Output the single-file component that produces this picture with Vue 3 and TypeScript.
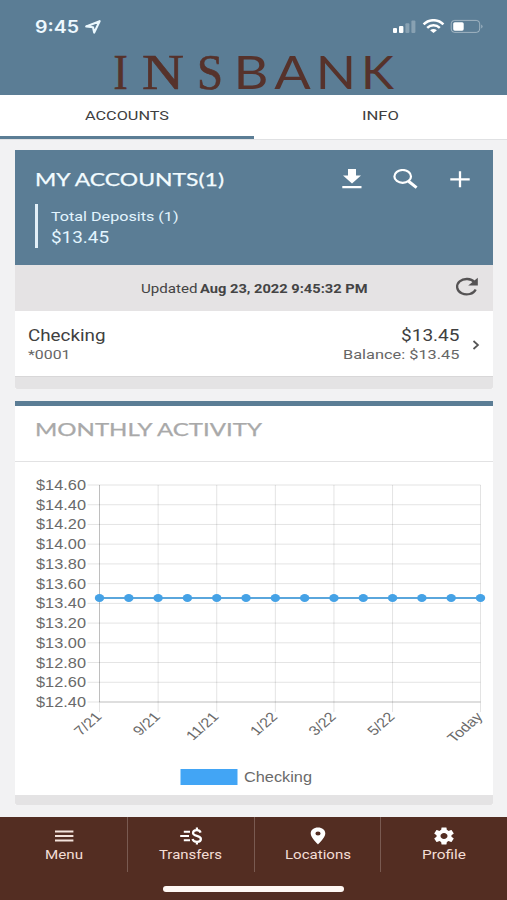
<script setup lang="ts">
import { h } from 'vue'

interface FitProps { text: string; w: number; size: number }

// Single line of text set to an exact width; the baseline sits `size` px below the top.
const FitText = (p: FitProps) =>
  h('svg', { width: p.w, height: Math.ceil(p.size * 1.25), style: { display: 'block', overflow: 'visible', flex: 'none' } }, [
    h('text', { x: 0, y: p.size, 'font-size': p.size, textLength: p.w, lengthAdjust: 'spacingAndGlyphs', fill: 'currentColor' }, p.text),
  ])
FitText.props = ['text', 'w', 'size']

const logo = [
  { c: 'I', x: 113.6, w: 14.2, serif: true },
  { c: 'N', x: 142, w: 41.9, serif: true },
  { c: 'S', x: 197, w: 26, serif: true },
  { c: 'B', x: 233.5, w: 35, serif: false },
  { c: 'A', x: 274.3, w: 36.5, serif: false },
  { c: 'N', x: 315.8, w: 40.3, serif: false },
  { c: 'K', x: 361, w: 33, serif: false },
]

const nav = [
  { id: 'menu', label: 'Menu', w: 38 },
  { id: 'transfers', label: 'Transfers', w: 63 },
  { id: 'locations', label: 'Locations', w: 66 },
  { id: 'profile', label: 'Profile', w: 44 },
]

// Chart geometry, relative to the chart area
const left = 84.5
const right = 465.5
const top = 23
const bottom = 240
const stepX = (right - left) / 13
const yLabels = Array.from({ length: 12 }, (_, i) => ({
  text: '$' + (14.6 - i * 0.2).toFixed(2),
  y: top + (i * (bottom - top)) / 11,
}))
const xLabels = [
  { text: '7/21', i: 0 }, { text: '9/21', i: 2 }, { text: '11/21', i: 4 }, { text: '1/22', i: 6 },
  { text: '3/22', i: 8 }, { text: '5/22', i: 10 }, { text: 'Today', i: 13 },
].map((l) => ({ text: l.text, x: left + l.i * stepX }))
const points = Array.from({ length: 14 }, (_, i) => left + i * stepX)
</script>

<template>
  <div class="phone">
    <header class="top">
      <div class="status">
        <FitText class="time" text="9:45" :w="44" :size="17" />
        <svg class="arrow" width="16" height="14" viewBox="0 0 16 14"><path d="M1.2 6.4 14.6 1.2 9.2 12.6 8 7.2Z" fill="none" stroke="#eaf8fe" stroke-width="2.1" stroke-linejoin="round" /></svg>
        <span class="spacer"></span>
        <svg width="92" height="16" viewBox="0 0 92 16">
          <g fill="#fff">
            <rect x="0" y="9" width="4" height="5" rx="1" /><rect x="6" y="7" width="4.4" height="7" rx="1" />
            <rect x="12.4" y="4.2" width="4" height="9.8" rx="1" opacity=".28" /><rect x="18.4" y="1.5" width="4" height="12.5" rx="1" opacity=".28" />
          </g>
          <g fill="none" stroke="#fff" stroke-width="2.5">
            <path d="M30.6 5.4C36-.2 45-.2 50.4 5.4" /><path d="M34.2 8.8C37.8 5.4 43.2 5.4 46.8 8.8" />
          </g>
          <path d="M37.1 11.2Q40.5 8.8 43.9 11.2L40.5 14Z" fill="#fff" />
          <rect x="58.2" y="1.4" width="28.5" height="12" rx="3.4" fill="none" stroke="#fff" stroke-opacity=".42" />
          <rect x="60.2" y="3.2" width="10.5" height="8.5" rx="1.6" fill="#fff" />
          <path d="M88.4 5.4Q90.6 7.4 88.4 9.6Z" fill="#fff" opacity=".5" />
        </svg>
      </div>
      <svg class="logo" width="507" height="65" viewBox="0 40 507 65">
        <text v-for="(l, i) in logo" :key="i" :x="l.x" y="89" :class="l.serif ? 'serif' : 'sans'" :textLength="l.w" lengthAdjust="spacingAndGlyphs">{{ l.c }}</text>
      </svg>
    </header>

    <nav class="tabs">
      <div class="tab active"><FitText text="ACCOUNTS" :w="84" :size="13.5" /></div>
      <div class="tab"><FitText text="INFO" :w="37" :size="13.5" /></div>
    </nav>

    <main class="content">
      <section class="card accounts">
        <div class="summary">
          <div class="title-row">
            <FitText class="title" text="MY ACCOUNTS(1)" :w="189" :size="18" />
            <div class="actions">
              <svg width="20" height="20" viewBox="0 0 20 20" fill="#fff"><path d="M6 0h8v6.5h5L10 14.5 1 6.5h5ZM.3 17h19.2v2.3H.3Z" /></svg>
              <svg width="25" height="20" viewBox="0 0 25 20" fill="none" stroke="#fff"><ellipse cx="9.7" cy="7.4" rx="8.3" ry="6.4" stroke-width="2.2" /><path d="M15.5 12.2 23.6 18.6" stroke-width="3" /></svg>
              <svg width="20" height="20" viewBox="0 0 20 20" stroke="#fff" stroke-width="2.3"><path d="M.3 10.4H19.7M10 2.3V18.3" /></svg>
            </div>
          </div>
          <div class="deposits">
            <FitText text="Total Deposits (1)" :w="127.5" :size="13.5" />
            <FitText class="amount" text="$13.45" :w="58" :size="16" />
          </div>
        </div>
        <div class="updated">
          <FitText text="Updated" :w="56.5" :size="13" />
          <FitText class="bold" text="Aug 23, 2022 9:45:32 PM" :w="167.5" :size="13" />
          <svg class="refresh" width="24" height="20" viewBox="0 0 24 20"><path d="M19.5 5.2A9.6 7.7 0 1 0 20.7 12.4" fill="none" stroke="#555354" stroke-width="2.3" /><path d="M22.8.8V8.6H13.2Z" fill="#555354" /></svg>
        </div>
        <div class="account">
          <div class="col">
            <FitText class="name" text="Checking" :w="77.5" :size="16.3" />
            <FitText class="sub" text="*0001" :w="42.5" :size="13.4" />
          </div>
          <div class="col end">
            <FitText class="name" text="$13.45" :w="58.5" :size="16.3" />
            <FitText class="sub" text="Balance: $13.45" :w="116.5" :size="13.4" />
          </div>
          <svg class="chevron" width="8" height="10" viewBox="0 0 8 10"><path d="M1.5 1 6 5 1.5 9" fill="none" stroke="#555" stroke-width="1.7" /></svg>
        </div>
        <div class="foot"></div>
      </section>

      <section class="card activity">
        <div class="activity-head"><FitText class="title" text="MONTHLY ACTIVITY" :w="227" :size="18" /></div>
        <svg class="chart" width="478" height="333" viewBox="0 0 478 333">
          <g stroke="#000" stroke-opacity=".11">
            <path v-for="l in yLabels" :key="l.text" :d="`M${left - 12} ${l.y}H${right}`" />
            <path v-for="l in xLabels" :key="l.text" :d="`M${l.x} ${top}V${bottom + 10}`" />
          </g>
          <path :d="`M${left} ${top}V${bottom}H${right}`" fill="none" stroke="#000" stroke-opacity=".16" />
          <text v-for="l in yLabels" :key="l.text" x="21" :y="l.y + 5" textLength="50" lengthAdjust="spacingAndGlyphs">{{ l.text }}</text>
          <text v-for="l in xLabels" :key="l.text" class="tick" text-anchor="end" :transform="`translate(${l.x + 3} ${bottom + 15.5}) scale(1.22 1) rotate(-47)`">{{ l.text }}</text>
          <path :d="`M${left} 136H${right}`" stroke="#5aa6dc" stroke-width="2.2" />
          <ellipse v-for="x in points" :key="x" :cx="x" cy="136" rx="4.7" ry="4" fill="#45a2e6" />
          <rect x="165.5" y="307" width="57" height="16" fill="#42a5f5" />
          <text x="229" y="319.7" textLength="68" lengthAdjust="spacingAndGlyphs">Checking</text>
        </svg>
        <div class="foot"></div>
      </section>
    </main>

    <footer class="bottom">
      <div class="items">
        <div v-for="n in nav" :key="n.id" class="item">
          <svg v-if="n.id === 'menu'" width="20" height="18" viewBox="0 0 20 18"><path d="M1 4.4H19.4M1 9H19.4M1 13.6H19.4" stroke="#f3e3dc" stroke-width="2" /></svg>
          <svg v-else-if="n.id === 'transfers'" width="22" height="18" viewBox="0 0 22 18" fill="none" stroke="#fff">
            <path d="M3.8 4.8H10M.2 9H9M3.8 13.2H10" stroke-width="1.9" />
            <path d="M20.6 5.7C20 3.8 18.6 3.2 16.9 3.2 14.6 3.2 13 4.3 13 6 13 9.7 20.9 8 20.9 12 20.9 13.9 19.3 14.8 17 14.8 14.6 14.8 13 13.9 12.5 12M16.9.6V3.3M16.9 14.7V17.4" stroke-width="2.2" />
          </svg>
          <svg v-else-if="n.id === 'locations'" width="16" height="18" viewBox="0 0 16 18"><path d="M8 .6C3.8.6.7 3.1.7 6.5.7 10.8 8 17.4 8 17.4S15.3 10.8 15.3 6.5C15.3 3.1 12.2.6 8 .6ZM8 4.4A2.6 2.1 0 1 1 8 8.6 2.6 2.1 0 1 1 8 4.4Z" fill="#fff" fill-rule="evenodd" /></svg>
          <svg v-else width="22" height="18" viewBox="1 1.5 22 21" preserveAspectRatio="none"><path fill="#fff" d="M19.43 12.98c.04-.32.07-.64.07-.98s-.03-.66-.07-.98l2.11-1.65c.19-.15.24-.42.12-.64l-2-3.46c-.12-.22-.39-.3-.61-.22l-2.49 1c-.52-.4-1.08-.73-1.69-.98l-.38-2.65C14.46 2.18 14.25 2 14 2h-4c-.25 0-.46.18-.49.42l-.38 2.65c-.61.25-1.17.59-1.69.98l-2.49-1c-.23-.09-.49 0-.61.22l-2 3.46c-.13.22-.07.49.12.64l2.11 1.65c-.04.32-.07.65-.07.98s.03.66.07.98l-2.11 1.65c-.19.15-.24.42-.12.64l2 3.46c.12.22.39.3.61.22l2.49-1c.52.4 1.08.73 1.69.98l.38 2.65c.03.24.24.42.49.42h4c.25 0 .46-.18.49-.42l.38-2.65c.61-.25 1.17-.59 1.69-.98l2.49 1c.23.09.49 0 .61-.22l2-3.46c.12-.22.07-.49-.12-.64l-2.11-1.65zM12 15.5c-1.93 0-3.5-1.57-3.5-3.5s1.57-3.5 3.5-3.5 3.5 1.57 3.5 3.5-1.57 3.5-3.5 3.5z" /></svg>
          <FitText :text="n.label" :w="n.w" :size="13" />
        </div>
      </div>
      <div class="home"></div>
    </footer>
  </div>
</template>

<style>
body { background: #f2f2f2; }
</style>

<style scoped>
.phone { width: 507px; height: 900px; display: flex; flex-direction: column; overflow: hidden; background: #f2f2f3; font-family: Roboto, "Liberation Sans", sans-serif; color: #444; }
svg { display: block; flex: none; }
.top { height: 95px; background: #5b7d95; }
.status { height: 40px; box-sizing: border-box; display: flex; align-items: flex-start; padding: 16px 22px 0 34.5px; color: #eef9ff; font-family: Inter, sans-serif; font-weight: 600; }
.status > svg:last-child { margin-top: 3px; }
.arrow { margin: 4px 0 0 6px; }
.spacer { flex: 1; }
.logo { fill: #56322b; overflow: visible; }
.serif { font: 50px "Liberation Serif", serif; stroke: #56322b; stroke-width: 0.7px; }
.sans { font: 45.5px Lato, sans-serif; }
.tabs { height: 45px; display: flex; background: #fff; border-bottom: 1px solid #e0e1e3; box-sizing: border-box; flex: none; position: relative; }
.tab { flex: 1; display: flex; justify-content: center; padding-top: 10.5px; color: #3e3e40; box-sizing: border-box; }
.tab.active { border-bottom: 3.5px solid #5b7d95; }
.content { flex: 1; padding: 10px 14px 0 15px; display: flex; flex-direction: column; gap: 12px; }
.card { background: #fff; }
.summary { height: 115px; box-sizing: border-box; padding: 18px 23px 0 20px; background: #5b7d95; color: #e3f5ff; }
.title-row { display: flex; justify-content: space-between; }
.title { font-family: Lato, sans-serif; color: #f3fcff; stroke: currentColor; stroke-width: 0.25px; }
.actions { display: flex; gap: 31px; padding-top: 1px; }
.actions svg:nth-child(3) { margin-left: 1px; }
.deposits { height: 44px; box-sizing: border-box; margin-top: 13px; padding: 2.5px 0 0 13px; border-left: 3px solid #e3f0f8; display: flex; flex-direction: column; gap: 3px; }
.updated { height: 46px; display: flex; justify-content: center; padding: 15px 0 0; box-sizing: border-box; gap: 3px; background: #e5e3e4; position: relative; color: #444; }
.bold { font-weight: 700; }
.refresh { position: absolute; right: 14px; top: 12px; }
.account { height: 66px; box-sizing: border-box; display: flex; padding: 14px 13px 0 13px; border-bottom: 1px solid #d8d7d8; }
.col { display: flex; flex-direction: column; }
.col .sub { margin-top: 0; color: #666; }
.col .name { color: #404040; }
.end { margin-left: auto; align-items: flex-end; }
.chevron { margin: 15px 0 0 12.5px; }
.foot { background: #e4e3e4; height: 12px; border-radius: 0 0 2px 2px; }
.activity { border-top: 5px solid #5b7d95; }
.activity-head { height: 56px; box-sizing: border-box; padding: 12px 0 0 20px; border-bottom: 1.5px solid #e2e2e3; }
.activity-head .title { color: #a9a9a9; }
.activity .foot { height: 10px; }
.chart { font: 14px "Liberation Sans", sans-serif; fill: #6a6a6a; }
.tick { font-size: 13.2px; }
.bottom { height: 83px; flex: none; background: #532d22; color: #f3ddd5; }
.items { display: flex; height: 55px; padding-left: 1.5px; }
.item { flex: 1; display: flex; flex-direction: column; align-items: center; padding-top: 10px; gap: 1px; box-sizing: border-box; }
.item + .item { border-left: 1.5px solid #795a51; }
.home { width: 181px; height: 6px; border-radius: 3px; background: #fff8f4; margin: 14px auto 0; }
</style>
